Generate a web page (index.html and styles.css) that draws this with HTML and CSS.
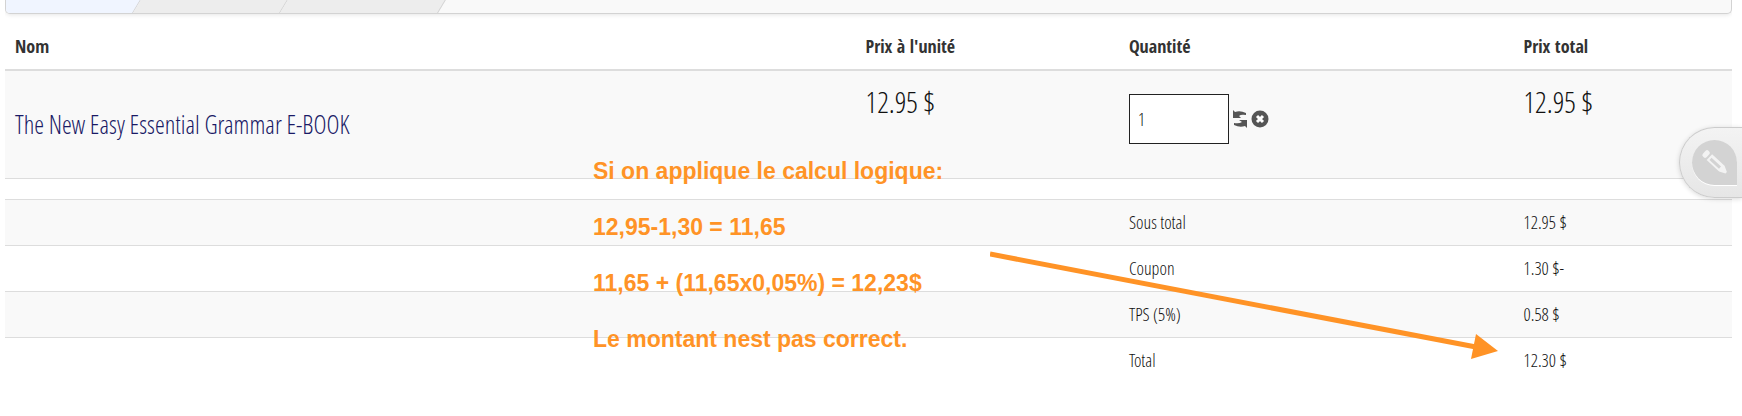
FILE: index.html
```html
<!DOCTYPE html>
<html lang="fr">
<head>
    <meta charset="UTF-8">
    <meta name="viewport" content="width=device-width, initial-scale=1.0">
    <title>Panier</title>
    <link rel="stylesheet" href="styles.css">
</head>
<body>

<!-- Étapes de la commande -->
<div class="steps">
    <span class="step active"></span>
    <span class="step"></span>
    <span class="step"></span>
</div>

<!-- Articles du panier -->
<table class="cart">
    <colgroup>
        <col class="col-name">
        <col class="col-unit">
        <col class="col-qty">
        <col class="col-total">
    </colgroup>
    <thead>
        <tr>
            <th>Nom</th>
            <th>Prix à l'unité</th>
            <th>Quantité</th>
            <th>Prix total</th>
        </tr>
    </thead>
    <tbody>
        <tr>
            <td class="name"><a href="#">The New Easy Essential Grammar E-BOOK</a></td>
            <td class="price">12.95 $</td>
            <td class="quantity">
                <div class="quantity-box">
                    <input type="text" value="1" aria-label="Quantité">
                    <button type="button" aria-label="Mettre à jour">
                        <svg width="18" height="18" viewBox="0 0 18 18">
                            <path d="M2 0 L4 2 Q9 0 15 3 V5 Q10 4 8 6 L10 8 L2 8 Z"/>
                            <path d="M16 18 L14 16 Q9 18 3 15 V13 Q8 14 11 12 L8 10 L16 10 Z"/>
                        </svg>
                    </button>
                    <button type="button" aria-label="Supprimer">
                        <svg width="18" height="18" viewBox="0 0 18 18">
                            <circle cx="9" cy="9" r="8.5"/>
                            <path class="cross" d="M6 6 L12 12 M12 6 L6 12"/>
                        </svg>
                    </button>
                </div>
            </td>
            <td class="price">12.95 $</td>
        </tr>
    </tbody>
</table>

<!-- Totaux -->
<table class="totals">
    <colgroup>
        <col class="col-name">
        <col class="col-unit">
        <col class="col-qty">
        <col class="col-total">
    </colgroup>
    <tbody>
        <tr>
            <td colspan="2"></td>
            <td>Sous total</td>
            <td>12.95 $</td>
        </tr>
        <tr>
            <td colspan="2"></td>
            <td>Coupon</td>
            <td>1.30 $-</td>
        </tr>
        <tr>
            <td colspan="2"></td>
            <td>TPS (5%)</td>
            <td>0.58 $</td>
        </tr>
        <tr>
            <td colspan="2"></td>
            <td>Total</td>
            <td>12.30 $</td>
        </tr>
    </tbody>
</table>

<!-- Annotations -->
<div class="note">
    <p>Si on applique le calcul logique:</p>
    <p>12,95-1,30 = 11,65</p>
    <p>11,65 + (11,65x0,05%) = 12,23$</p>
    <p>Le montant nest pas correct.</p>
</div>
<svg class="arrow" width="510" height="110" viewBox="0 0 510 110">
    <path class="line" d="M0 4 L486 97"/>
    <path class="head" d="M508 101 L486 84 L481 109 Z"/>
</svg>

<!-- Onglet de modification -->
<button type="button" class="edit-tab" aria-label="Modifier">
    <span class="edit-icon">
        <svg width="45" height="45" viewBox="0 0 45 45">
            <g transform="translate(13 13) rotate(43)">
                <rect x="-1" y="-4" width="5" height="8" rx="2"/>
                <path fill-rule="evenodd" d="M6 -4 H23 L29 -1 V1 L23 4 H6 Z M8 -1 V2 H21 V-1 Z"/>
            </g>
        </svg>
    </span>
</button>

</body>
</html>
```

FILE: styles.css
```css
/* Style général */
body {
    font-family: 'Open Sans Condensed Light', 'Open Sans Condensed', 'Open Sans', sans-serif;
    font-size: 18px;
    font-weight: 300;
    line-height: 25px;
    margin: 0 10px 0 5px;
    color: #111;
    background-color: #fff;
}

/* Étapes */
.steps {
    display: flex;
    height: 13px;
    overflow: hidden;
    background-color: #f9f9f9;
    border: 1px solid #d3d3d3;
    border-top: none;
    border-radius: 0 0 5px 5px;
    box-shadow: 0 1px 4px rgba(0, 0, 0, 0.1);
}

.step {
    width: 146px;
    background-color: #ededed;
    border-right: 1px solid #d3d3d3;
    transform: skewX(-31deg);
    transform-origin: bottom;
}

.step.active {
    width: 136px;
    margin-left: -10px;
    background-color: #f0f5ff;
}

.step:last-child {
    width: 157px;
}

/* Tableaux */
table {
    width: 100%;
    table-layout: fixed;
    border-collapse: separate;
    border-spacing: 0;
}

.col-name {
    width: 49.25%;
}

.col-unit {
    width: 15.25%;
}

.col-qty {
    width: 22.85%;
}

th,
td {
    padding: 10px;
    text-align: left;
}

th {
    padding: 20px 10px 10px;
    font-family: 'Open Sans Condensed', 'Open Sans', sans-serif;
    font-weight: bold;
    color: #333;
    border-bottom: 2px solid #ddd;
}

.cart td {
    height: 87px;
    background-color: #f9f9f9;
    border-bottom: 1px solid #ddd;
}

.name {
    font-size: 25px;
}

.name a {
    color: #1a1a66;
    text-decoration: none;
}

.price {
    font-size: 29px;
    line-height: 42px;
    vertical-align: top;
}

.quantity {
    vertical-align: top;
}

.quantity-box {
    display: flex;
    align-items: center;
    gap: 2px;
    margin-top: 13px;
}

.quantity-box input {
    width: 100px;
    height: 50px;
    box-sizing: border-box;
    padding: 0 8px;
    border: 1px solid #222;
    font: inherit;
    color: #111;
    background-color: #fff;
}

.quantity-box button {
    display: flex;
    padding: 0;
    border: none;
    background: none;
    fill: #555;
    cursor: pointer;
}

.cross {
    stroke: #fff;
    stroke-width: 3;
}

/* Totaux */
.totals {
    margin-top: 20px;
}

.totals td {
    border-top: 1px solid #ddd;
}

.totals tr:nth-child(odd) td {
    background-color: #f9f9f9;
}

/* Annotations */
.note {
    position: absolute;
    top: 143px;
    left: 593px;
    font: bold 23px/56px 'Liberation Sans', Arial, sans-serif;
    color: #ff9326;
}

.note p {
    margin: 0;
}

.arrow {
    position: absolute;
    top: 250px;
    left: 990px;
}

.line {
    stroke: #ff9326;
    stroke-width: 5;
}

.head {
    fill: #ff9326;
}

/* Onglet */
.edit-tab {
    position: absolute;
    top: 127px;
    right: 0;
    width: 63px;
    height: 71px;
    padding: 0 0 0 12px;
    border: 1px solid #ccc;
    border-right: none;
    border-radius: 36px 0 0 36px;
    background: linear-gradient(#f3f3f3, #e6e6e6);
    box-shadow: 0 1px 5px rgba(0, 0, 0, 0.15);
    cursor: pointer;
}

.edit-icon {
    display: block;
    width: 45px;
    height: 45px;
    border-radius: 50% 50% 0 50%;
    background-color: #d3d3d3;
    box-shadow: 0 1px 0 #fff;
    fill: #f3f3f3;
}
```
